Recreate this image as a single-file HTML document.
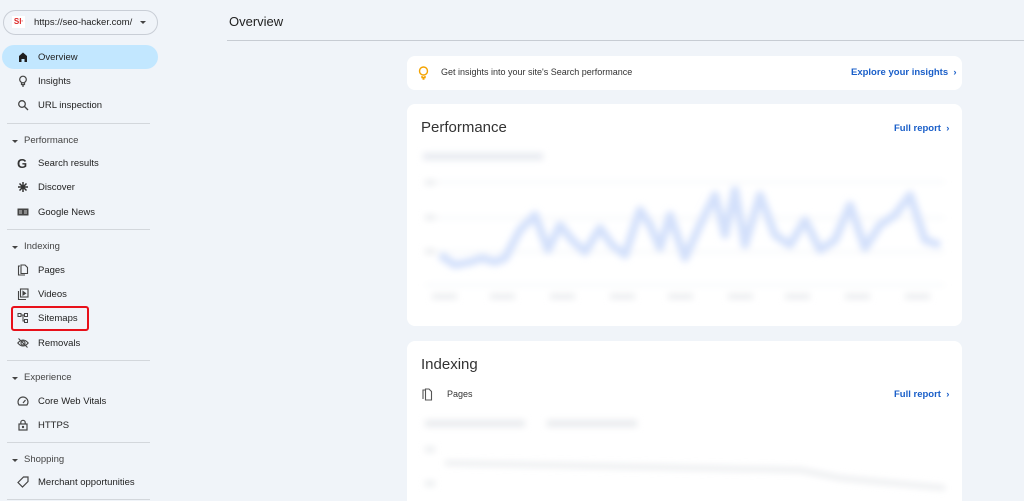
<!DOCTYPE html>
<html><head><meta charset="utf-8"><style>
*{box-sizing:border-box;margin:0;padding:0}
html,body{width:1024px;height:501px;overflow:hidden}
body{background:#f0f4f9;font-family:"Liberation Sans",Arial,sans-serif;color:#1f1f1f;position:relative}
.a{position:absolute}
.item{position:absolute;left:0;width:157px;height:24px;font-size:9.5px;line-height:24px;color:#1f1f1f}
.item .t{position:absolute;left:38px;top:1px}
.item svg{position:absolute;left:17px;top:6px;width:12px;height:12px}
.sec{position:absolute;left:24px;font-size:9.5px;color:#444}
.sec:before{content:"";position:absolute;left:-12px;top:5px;border-left:3px solid transparent;border-right:3px solid transparent;border-top:3px solid #444}
.div{position:absolute;left:7px;width:143px;height:1px;background:#d3d7dc}
.card{position:absolute;left:407px;width:555px;background:#fff;border-radius:8px}
.link{position:absolute;color:#1a5fc9;font-size:9.5px;font-weight:bold}
</style></head><body>
<div class="a" style="left:3px;top:10px;width:155px;height:25px;border:1px solid #c9ced6;border-radius:13px"></div>
<div class="a" style="left:12px;top:16px;width:13px;height:12px;background:#fff;color:#d22;font-size:8px;font-weight:bold;text-align:center;line-height:12px">Sŀ</div>
<div class="a" style="left:34px;top:17px;font-size:9.5px">https://seo-hacker.com/</div>
<div class="a" style="left:140px;top:21px;border-left:3px solid transparent;border-right:3px solid transparent;border-top:3px solid #444"></div>

<div class="a" style="left:2px;top:45px;width:156px;height:24px;background:#c2e7ff;border-radius:12px"></div>
<div class="item" style="top:45px"><svg viewBox="0 0 12 12"><path d="M2 11V5l4-3.5L10 5v6H7.5V8h-3v3z" fill="#1f1f1f"/></svg><span class="t">Overview</span></div>
<div class="item" style="top:69px"><svg viewBox="0 0 12 12" fill="none" stroke="#444" stroke-width="1.2"><circle cx="6" cy="4.5" r="3.3"/><path d="M4.5 8v1.5h3V8M5 11h2"/></svg><span class="t">Insights</span></div>
<div class="item" style="top:93px"><svg viewBox="0 0 12 12" fill="none" stroke="#444" stroke-width="1.3"><circle cx="5" cy="5" r="3.3"/><path d="M7.5 7.5L11 11"/></svg><span class="t">URL inspection</span></div>
<div class="div" style="top:123px"></div>
<div class="sec" style="top:135px">Performance</div>
<div class="item" style="top:151px"><svg viewBox="0 0 12 12"><text x="0" y="11" font-size="13" font-weight="bold" fill="#333" font-family="Liberation Sans">G</text></svg><span class="t">Search results</span></div>
<div class="item" style="top:175px"><svg viewBox="0 0 12 12" stroke="#333" stroke-width="1.5"><path d="M6 1v10M1 6h10M2.5 2.5l7 7M9.5 2.5l-7 7"/></svg><span class="t">Discover</span></div>
<div class="item" style="top:200px"><svg viewBox="0 0 12 12"><rect x="0.5" y="2.5" width="11" height="7" fill="#444"/><path d="M2 5h3M2 7h3M7 5h3M7 7h3" stroke="#fff" stroke-width=".8"/></svg><span class="t">Google News</span></div>
<div class="div" style="top:229px"></div>
<div class="sec" style="top:241px">Indexing</div>
<div class="item" style="top:258px"><svg viewBox="0 0 12 12" fill="none" stroke="#444" stroke-width="1.1"><path d="M3 2H1.5v9H8"/><path d="M4 1h4l2.5 2.5V9.5H4z"/></svg><span class="t">Pages</span></div>
<div class="item" style="top:282px"><svg viewBox="0 0 12 12" fill="none" stroke="#444" stroke-width="1.1"><path d="M1.5 3v8.5H9"/><rect x="3.5" y="1" width="7.5" height="8"/><path d="M6 3.5v3.5l2.5-1.7z" fill="#444"/></svg><span class="t">Videos</span></div>
<div class="item" style="top:306px"><svg viewBox="0 0 12 12" fill="none" stroke="#444" stroke-width="1"><rect x="1" y="1.5" width="3" height="3"/><rect x="7.5" y="1.5" width="3" height="3"/><rect x="7.5" y="7.5" width="3" height="3"/><path d="M4 3h3.5M6 3v6h1.5"/></svg><span class="t">Sitemaps</span></div>
<div class="a" style="left:11px;top:306px;width:78px;height:25px;border:2px solid #e8101a;border-radius:3px"></div>
<div class="item" style="top:331px"><svg viewBox="0 0 12 12" fill="none" stroke="#444" stroke-width="1.1"><path d="M.8 6Q6 0 11.2 6Q6 12 .8 6z"/><circle cx="6" cy="6" r="2"/><path d="M1.5 1.5l9 9"/></svg><span class="t">Removals</span></div>
<div class="div" style="top:360px"></div>
<div class="sec" style="top:372px">Experience</div>
<div class="item" style="top:389px"><svg viewBox="0 0 12 12" fill="none" stroke="#444" stroke-width="1.2"><path d="M2 10A5 5 0 1 1 10 10z"/><path d="M6 8l2.5-3"/></svg><span class="t">Core Web Vitals</span></div>
<div class="item" style="top:413px"><svg viewBox="0 0 12 12" fill="none" stroke="#444" stroke-width="1.2"><rect x="2" y="5" width="8" height="6"/><path d="M3.8 5V3.5a2.2 2.2 0 0 1 4.4 0V5"/><circle cx="6" cy="8" r=".6" fill="#444"/></svg><span class="t">HTTPS</span></div>
<div class="div" style="top:442px"></div>
<div class="sec" style="top:454px">Shopping</div>
<div class="item" style="top:470px"><svg viewBox="0 0 12 12" fill="none" stroke="#444" stroke-width="1.2"><path d="M1 6.5L6.5 1H11v4.5L5.5 11z"/></svg><span class="t">Merchant opportunities</span></div>
<div class="div" style="top:499px"></div>

<div class="a" style="left:229px;top:14px;font-size:13px;color:#1f1f1f">Overview</div>
<div class="a" style="left:227px;top:40px;width:797px;height:1px;background:#c7ccd3"></div>

<div class="card" style="top:56px;height:34px">
<svg class="a" style="left:11px;top:10px" width="11" height="14" viewBox="0 0 11 14" fill="none" stroke="#f4a300" stroke-width="1.4"><circle cx="5.5" cy="5" r="4"/><path d="M4 10v1.5h3V10M4.5 13h2"/></svg>
<div class="a" style="left:34px;top:11px;font-size:9px;color:#333">Get insights into your site's Search performance</div>
<div class="link" style="left:444px;top:11px">Explore your insights &nbsp;›</div>
</div>

<div class="card" style="top:104px;height:222px">
<div class="a" style="left:14px;top:15px;font-size:15px;color:#333">Performance</div>
<div class="link" style="left:487px;top:19px">Full report &nbsp;›</div>
<svg class="a" style="left:0;top:0" width="555" height="222" viewBox="407 104 555 222">
<defs><filter id="b" x="-10%" y="-50%" width="120%" height="200%"><feGaussianBlur stdDeviation="3.5"/></filter></defs>
<g filter="url(#b)">
<rect x="423" y="153" width="120" height="7" fill="#e6e9f0"/>
<path d="M425 182H945M425 218H945M425 252H945M425 285H945" stroke="#f3f5f8" stroke-width="2"/>
<polyline fill="none" stroke="#d3e0fb" stroke-width="8" stroke-linejoin="round" points="440,255 455,265 470,262 482,258 495,262 505,258 520,230 535,215 548,250 560,225 572,240 585,252 600,228 612,245 625,255 640,210 650,225 660,248 670,215 685,258 700,225 715,195 725,235 735,190 745,245 760,195 775,235 790,245 805,220 820,250 835,240 850,205 865,248 880,225 895,215 910,195 925,240 940,245"/>
<g fill="#e8eaed"><rect x="425" y="180" width="10" height="5"/><rect x="425" y="215" width="10" height="5"/><rect x="425" y="249" width="10" height="5"/>
<rect x="432" y="294" width="25" height="5"/><rect x="490" y="294" width="25" height="5"/><rect x="550" y="294" width="25" height="5"/><rect x="610" y="294" width="25" height="5"/><rect x="668" y="294" width="25" height="5"/><rect x="728" y="294" width="25" height="5"/><rect x="785" y="294" width="25" height="5"/><rect x="845" y="294" width="25" height="5"/><rect x="905" y="294" width="25" height="5"/></g>
</g></svg>
</div>

<div class="card" style="top:341px;height:160px;border-radius:8px 8px 0 0">
<div class="a" style="left:14px;top:15px;font-size:15px;color:#333">Indexing</div>
<svg class="a" style="left:15px;top:47px" width="11" height="13" viewBox="0 0 11 13" fill="none" stroke="#555" stroke-width="1.1"><path d="M3 2H1v9"/><path d="M3.5 1h3.5l2.5 2.5v8.5H3.5z"/></svg>
<div class="a" style="left:40px;top:48px;font-size:9px;color:#333">Pages</div>
<div class="link" style="left:487px;top:48px">Full report &nbsp;›</div>
<svg class="a" style="left:0;top:0" width="555" height="160" viewBox="407 341 555 160"><g filter="url(#b)"><rect x="425" y="420" width="100" height="7" fill="#e8eaed"/><rect x="547" y="420" width="90" height="7" fill="#e8eaed"/><path d="M445 463L800 470L840 478L945 488" stroke="#e6e8eb" stroke-width="4" fill="none"/><rect x="425" y="447" width="10" height="5" fill="#e8eaed"/><rect x="425" y="481" width="10" height="5" fill="#e8eaed"/></g></svg>
</div>
</body></html>
